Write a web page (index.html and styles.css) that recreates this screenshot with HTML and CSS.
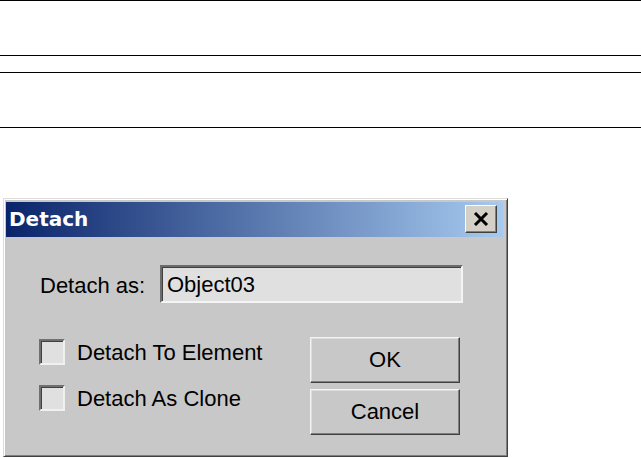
FILE: index.html
```html
<!DOCTYPE html>
<html>
<head>
<meta charset="utf-8">
<link rel="stylesheet" href="styles.css">
</head>
<body>
<div class="band"></div>
<div class="band band-second"></div>
<div class="dialog">
  <div class="titlebar">
    <span class="title">Detach</span>
    <button class="close" type="button" aria-label="Close">
      <svg width="16" height="14" viewBox="0 0 16 14"><path d="M2 1 L14 13 M14 1 L2 13" stroke="#000" stroke-width="3" fill="none"/></svg>
    </button>
  </div>
  <div class="body">
    <div class="row-name">
      <span class="label">Detach as:</span>
      <div class="field">Object03</div>
    </div>
    <div class="row-options">
      <div class="checks">
        <label class="check"><span class="box"></span><span class="check-text">Detach To Element</span></label>
        <label class="check"><span class="box"></span><span class="check-text">Detach As Clone</span></label>
      </div>
      <div class="buttons">
        <button class="btn" type="button">OK</button>
        <button class="btn" type="button">Cancel</button>
      </div>
    </div>
  </div>
</div>
</body>
</html>
```

FILE: styles.css
```css
html, body {
  margin: 0;
  padding: 0;
  background: #fff;
}
body {
  width: 641px;
  height: 458px;
  overflow: hidden;
  font-family: "Liberation Sans", Arial, sans-serif;
}
.band {
  height: 54px;
  border-top: 1px solid #000;
  border-bottom: 1px solid #000;
}
.band-second {
  margin-top: 16px;
}
.dialog {
  margin: 70px 0 0 3px;
  width: 505px;
  height: 259px;
  box-sizing: border-box;
  background: #c8c8c8;
  border: 1px solid;
  border-color: #dcdcdc #404040 #404040 #dcdcdc;
  box-shadow: inset 1px 1px #ffffff, inset -1px -1px #808080;
  padding: 3px 4px 0 2px;
  display: flex;
  flex-direction: column;
}
.titlebar {
  height: 35px;
  background: linear-gradient(to right, #0a246a, #a6caf0);
  display: flex;
  align-items: center;
  justify-content: space-between;
  padding: 0 6px 0 3px;
}
.title {
  color: #fff;
  font-family: "DejaVu Sans", Verdana, sans-serif;
  font-weight: bold;
  font-size: 20px;
  margin-top: -1px;
}
.close {
  width: 32px;
  height: 28px;
  margin: 0;
  padding: 0;
  box-sizing: border-box;
  background: #d4d0c8;
  border: 1px solid;
  border-color: #ffffff #404040 #404040 #ffffff;
  box-shadow: inset -1px -1px #808080;
  display: flex;
  align-items: center;
  justify-content: center;
  margin-top: -2px;
}
.body {
  padding: 28px 0 0 0;
  font-size: 22px;
  color: #000;
}
.row-name {
  display: flex;
  align-items: center;
  padding-left: 34px;
}
.label {
  width: 120px;
  margin-top: 3px;
}
.field {
  width: 303px;
  height: 38px;
  box-sizing: border-box;
  background: #e0e0e0;
  border: 2px solid;
  border-color: #6c6c6c #f4f4f4 #f4f4f4 #6c6c6c;
  box-shadow: inset 1px 1px #404040;
  padding: 3px 0 0 5px;
  line-height: 30px;
}
.row-options {
  display: flex;
  margin-top: 34px;
  padding-left: 33px;
}
.checks {
  width: 271px;
  display: flex;
  flex-direction: column;
  gap: 20px;
  padding-top: 2px;
}
.check {
  display: flex;
  align-items: center;
  height: 26px;
}
.box {
  width: 26px;
  height: 26px;
  box-sizing: border-box;
  background: #e0e0e0;
  border: 2px solid;
  border-color: #707070 #f0f0f0 #f0f0f0 #707070;
  box-shadow: inset 1px 1px #404040;
  margin-right: 12px;
}
.check-text {
  margin-top: 2px;
}
.buttons {
  display: flex;
  flex-direction: column;
  gap: 6px;
}
.btn {
  width: 150px;
  height: 46px;
  margin: 0;
  box-sizing: border-box;
  background: #c8c8c8;
  border: 1px solid;
  border-color: #f4f4f4 #404040 #404040 #f4f4f4;
  box-shadow: inset -1px -1px #808080, inset 1px 1px #dcdcdc;
  font-family: "Liberation Sans", Arial, sans-serif;
  font-size: 22px;
  color: #000;
  padding: 0;
}
```
